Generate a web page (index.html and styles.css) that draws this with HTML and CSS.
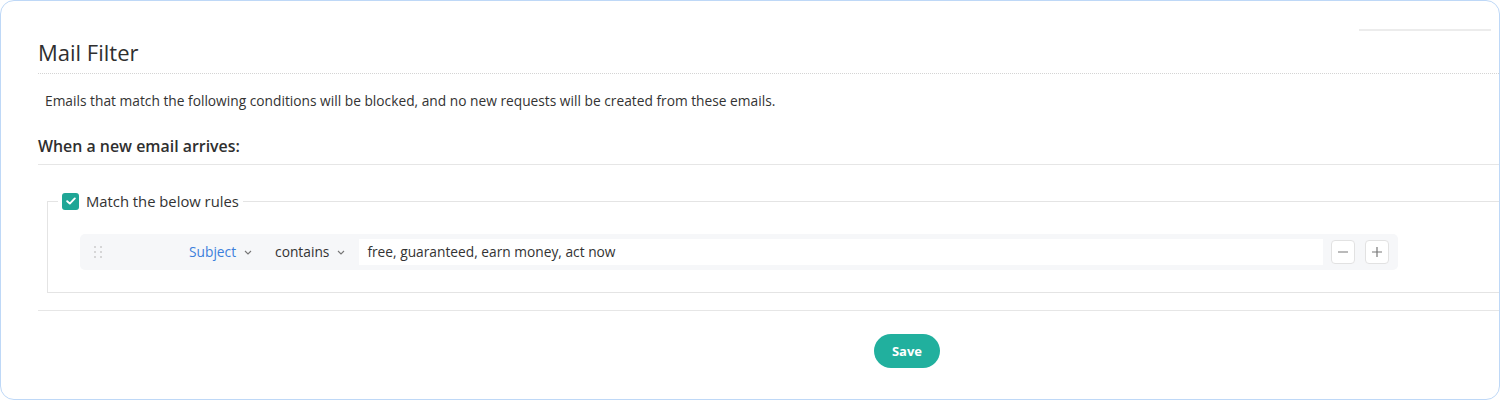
FILE: index.html
```html
<!DOCTYPE html>
<html lang="en">
<head>
<meta charset="utf-8">
<title>Mail Filter</title>
<link rel="stylesheet" href="styles.css">
</head>
<body>
<div class="card">
  <div class="content">
    <div class="header">
      <h1 class="title">Mail Filter</h1>
      <div class="header-tab"></div>
    </div>
    <p class="desc">Emails that match the following conditions will be blocked, and no new requests will be created from these emails.</p>
    <h2 class="section">When a new email arrives:</h2>
    <fieldset class="rules">
      <legend class="rules-legend">
        <span class="checkbox">
          <svg width="10" height="8" viewBox="0 0 10 8"><path d="M1.2 4.2 L3.8 6.6 L8.8 1.4" fill="none" stroke="#fff" stroke-width="1.9" stroke-linecap="round" stroke-linejoin="round"/></svg>
        </span>
        <span class="legend-text">Match the below rules</span>
      </legend>
      <div class="rule">
        <span class="handle">
          <i></i><i></i><i></i><i></i><i></i><i></i>
        </span>
        <span class="select field">Subject
          <svg class="chev" width="8" height="5" viewBox="0 0 8 5"><path d="M1 1 L4 4 L7 1" fill="none" stroke="#777" stroke-width="1.1"/></svg>
        </span>
        <span class="select op">contains
          <svg class="chev" width="8" height="5" viewBox="0 0 8 5"><path d="M1 1 L4 4 L7 1" fill="none" stroke="#777" stroke-width="1.1"/></svg>
        </span>
        <div class="value">free, guaranteed, earn money, act now</div>
        <span class="btn-icon">
          <svg width="12" height="12" viewBox="0 0 12 12"><path d="M1 6 H11" stroke="#777" stroke-width="1.2"/></svg>
        </span>
        <span class="btn-icon">
          <svg width="12" height="12" viewBox="0 0 12 12"><path d="M1 6 H11 M6 1 V11" stroke="#777" stroke-width="1.2"/></svg>
        </span>
      </div>
    </fieldset>
    <div class="divider"></div>
    <div class="actions">
      <button class="save">Save</button>
    </div>
  </div>
</div>
</body>
</html>
```
FILE: styles.css
```css
* { box-sizing: border-box; }
html, body { margin: 0; padding: 0; background: #fff; }
body {
  font-family: "Open Sans", "Liberation Sans", sans-serif;
  color: #333;
  width: 1500px;
  height: 400px;
}
.card {
  width: 1500px;
  height: 400px;
  border: 1.5px solid #bed8f7;
  border-radius: 14px;
  overflow: hidden;
  background: #fff;
}
.content {
  padding-left: 37px;
  margin-right: -20px;
}
.header {
  display: flex;
  justify-content: space-between;
  align-items: flex-start;
  border-bottom: 1px dotted #d4d4d4;
  padding-top: 36px;
  padding-bottom: 6px;
}
.title {
  margin: 0;
  font-size: 22px;
  font-weight: 400;
  line-height: 30px;
  color: #2f2f2f;
}
.header-tab {
  width: 132px;
  margin-top: -8px;
  margin-right: 28px;
  height: 2px;
  background: #ececec;
}
.desc {
  margin: 17px 0 0 7px;
  font-size: 13.75px;
  line-height: 20px;
  color: #333;
}
.section {
  margin: 24px 0 0 0;
  font-size: 15.9px;
  font-weight: 600;
  line-height: 22px;
  padding-bottom: 7px;
  border-bottom: 1px solid #e6e6e6;
  color: #2f2f2f;
}
.rules {
  margin: 26px 0 0 9px;
  padding: 23px 0 22px 10px;
  border: 1px solid #e4e4e4;
  min-width: 0;
}
.rules-legend {
  padding: 0 4px;
  display: flex;
  align-items: center;
  height: 20px;
}
.checkbox {
  width: 17px;
  height: 17px;
  border-radius: 3px;
  background: #1fa696;
  display: inline-flex;
  align-items: center;
  justify-content: center;
  margin-right: 7px;
}
.legend-text {
  font-size: 14.8px;
  line-height: 20px;
  color: #333;
}
.rule {
  margin-left: 22px;
  width: 1318px;
  height: 36px;
  background: #f6f7f9;
  border-radius: 5px;
  display: flex;
  align-items: center;
  padding: 0 8px 0 14px;
}
.handle {
  display: grid;
  grid-template-columns: 2px 2px;
  column-gap: 4px;
  row-gap: 3px;
  width: 8px;
}
.handle i {
  display: block;
  width: 2px;
  height: 2px;
  background: #cbcbcb;
  border-radius: 1px;
}
.select {
  font-size: 13.75px;
  line-height: 20px;
  display: inline-flex;
  align-items: center;
}
.chev { margin-left: 8px; }
.field {
  color: #3d7fdc;
  margin-left: 87px;
}
.op {
  margin-left: 23px;
  color: #333;
}
.value {
  margin-left: 14px;
  width: 964px;
  height: 26px;
  background: #fff;
  font-size: 13.75px;
  line-height: 26px;
  padding-left: 8px;
  color: #333;
  flex-shrink: 0;
}
.btn-icon {
  width: 24px;
  height: 24px;
  border: 1px solid #e2e2e2;
  border-radius: 4px;
  background: #fff;
  display: inline-flex;
  align-items: center;
  justify-content: center;
  margin-left: 8px;
  flex-shrink: 0;
}
.btn-icon + .btn-icon { margin-left: 10px; }
.divider {
  margin-top: 17px;
  border-top: 1px solid #e6e6e6;
}
.actions {
  padding-top: 23px;
  padding-left: 836px;
}
.save {
  width: 66px;
  height: 34px;
  border: none;
  border-radius: 17px;
  background: #21b09e;
  color: #fff;
  font-family: "Open Sans", "Liberation Sans", sans-serif;
  font-size: 13px;
  font-weight: 700;
  padding: 0;
}
```
